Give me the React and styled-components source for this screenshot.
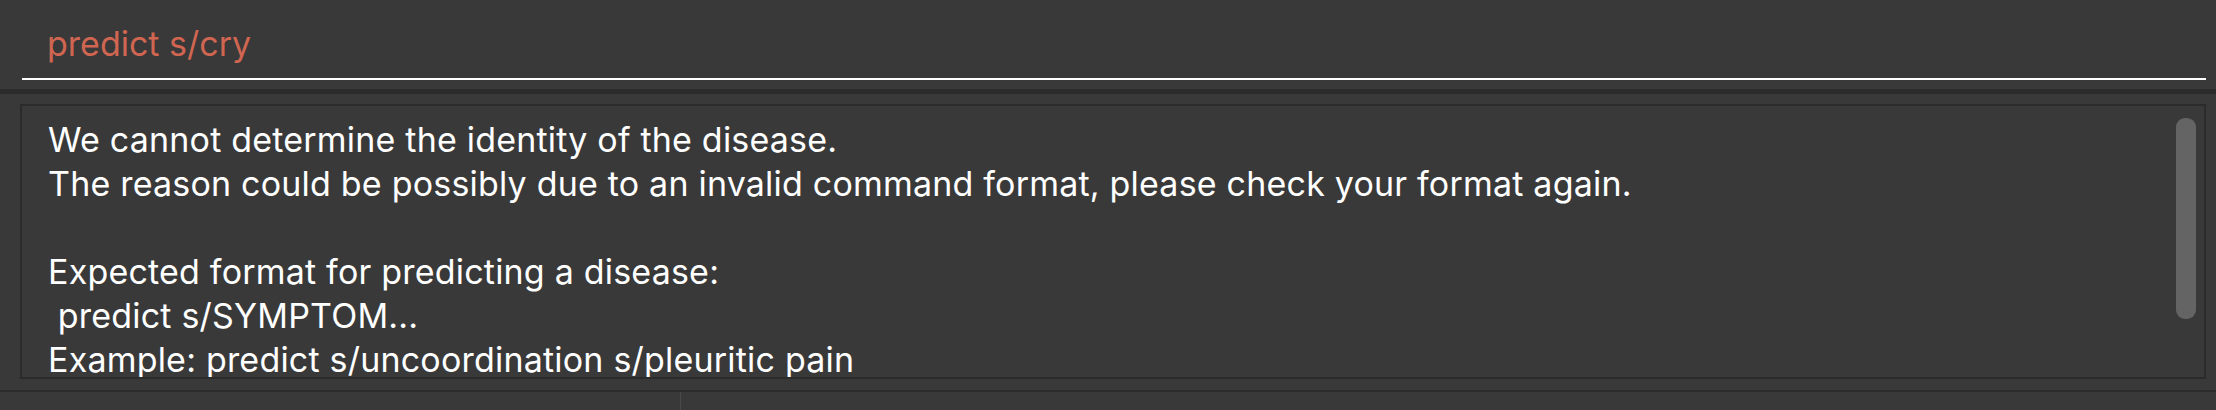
import React from "react";
import styled, { createGlobalStyle } from "styled-components";

const BG = "#393939";
const DARK = "#2b2b2b";

const GlobalStyle = createGlobalStyle`
  html, body {
    margin: 0;
    padding: 0;
    background: ${BG};
    overflow: hidden;
  }
  * {
    box-sizing: border-box;
  }
`;

const resultLines = [
  "We cannot determine the identity of the disease.",
  "The reason could be possibly due to an invalid command format, please check your format again.",
  "",
  "Expected format for predicting a disease:",
  " predict s/SYMPTOM...",
  "Example: predict s/uncoordination s/pleuritic pain",
  "",
  "Note: symptoms are separated by the s/ prefix.",
];

const App = () => {
  return (
    <Window>
      <GlobalStyle />
      <CommandBox>
        <CommandField>
          <CommandText>predict s/cry</CommandText>
        </CommandField>
      </CommandBox>
      <Divider size={5} />
      <ResultPane>
        <ResultBox>
          <ResultText>
            {resultLines.map((line, i) => (
              <Line key={i}>{line === "" ? "\u00a0" : line}</Line>
            ))}
          </ResultText>
          <ScrollTrack>
            <ScrollThumb />
          </ScrollTrack>
        </ResultBox>
      </ResultPane>
      <Divider size={2} />
      <StatusBar>
        <StatusCell width={681} />
        <StatusCell />
      </StatusBar>
    </Window>
  );
};

export default App;

const Window = styled.div`
  width: 2216px;
  height: 410px;
  display: flex;
  flex-direction: column;
  background: ${BG};
  font-family: Inter, "Noto Sans", sans-serif;
`;

const CommandBox = styled.div`
  height: 89px;
  flex: none;
  padding: 0 10px 9px 22px;
  display: flex;
  flex-direction: column;
  justify-content: flex-end;
`;

const CommandField = styled.div`
  border-bottom: 2px solid #ffffff;
  padding: 0 0 14px 25px;
`;

const CommandText = styled.span`
  display: block;
  color: #d06651;
  font-size: 34px;
  line-height: 40px;
  white-space: pre;
`;

const Divider = styled.div`
  height: ${(p) => p.size}px;
  flex: none;
  background: ${DARK};
`;

const ResultPane = styled.div`
  height: 296px;
  flex: none;
  padding: 10px 10px 11px 20px;
  display: flex;
`;

const ResultBox = styled.div`
  flex: 1;
  display: flex;
  border: 2px solid ${DARK};
  overflow: hidden;
`;

const ResultText = styled.div`
  flex: 1;
  padding: 12px 0 0 26px;
  color: #ffffff;
  font-size: 34px;
  line-height: 44px;
  letter-spacing: 0.2px;
  overflow: hidden;
`;

const Line = styled.div`
  white-space: pre;
`;

const ScrollTrack = styled.div`
  width: 28px;
  flex: none;
  padding: 12px 8px 0 0;
`;

const ScrollThumb = styled.div`
  width: 20px;
  height: 201px;
  border-radius: 9px;
  background: #646464;
`;

const StatusBar = styled.div`
  flex: 1;
  display: flex;
`;

const StatusCell = styled.div`
  ${(p) => (p.width ? `width: ${p.width}px; flex: none;` : "flex: 1;")}
  border-right: ${(p) => (p.width ? "1px solid #4a4a4a" : "none")};
`;
